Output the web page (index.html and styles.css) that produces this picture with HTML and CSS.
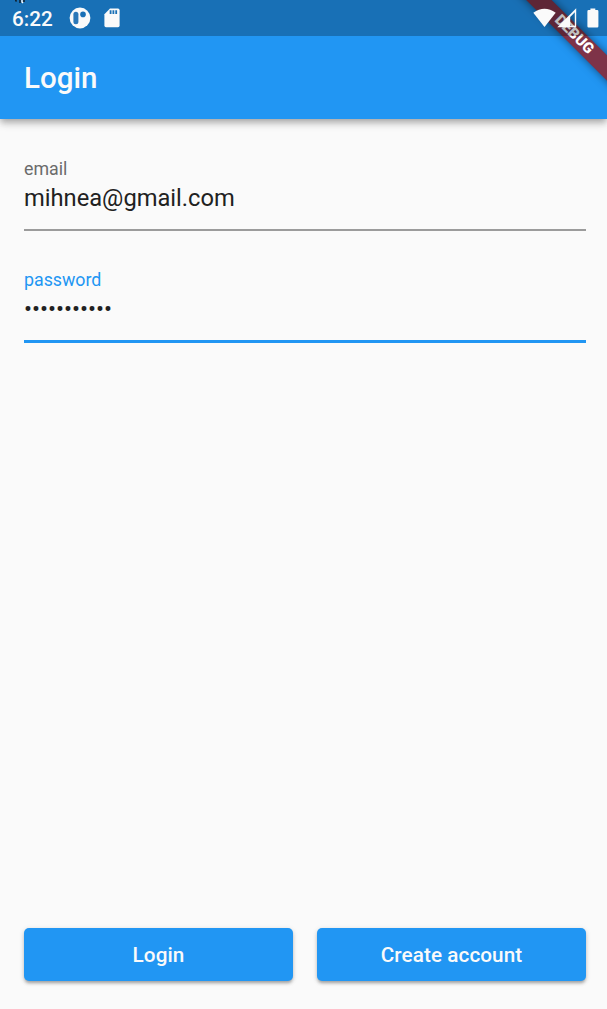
FILE: index.html
```html
<!DOCTYPE html>
<html lang="en">
<head>
<meta charset="utf-8">
<title>Login</title>
<link rel="stylesheet" href="styles.css">
</head>
<body>
<div class="screen">
  <header class="app-bar">
    <div class="status-bar">
      <svg class="cursor" width="14" height="4" viewBox="0 0 14 4"><path d="M1.5 0L2.5 1.5M6 0V3M10 0V2" fill="none" stroke="#101820" stroke-width="1.4"/><path d="M8 0V2L9 3" fill="none" stroke="#fff" stroke-width="1.4"/></svg>
      <span class="clock">6:22</span>
      <svg class="pill-icon" width="22" height="22" viewBox="0 0 22 22"><circle cx="11" cy="11" r="10.4" fill="#fafafa"/><rect x="4.4" y="4.8" width="5" height="12.4" rx="2.5" fill="#2b78b8"/><circle cx="14" cy="7.4" r="2.8" fill="#1a70b6"/></svg>
      <svg class="sd-icon" width="16" height="20" viewBox="0 0 16 20"><path d="M6 .6H14Q15.6.6 15.6 2.2V17.6Q15.6 19.2 14 19.2H2Q.4 19.2.4 17.6V6.2Z" fill="#fafafa"/><path d="M6.6 2.3V6M9.4 2.3V6M12.2 2.3V6" stroke="#1a70b6" stroke-width="1.8"/></svg>
      <div class="system-icons">
        <svg width="23" height="20" viewBox="0 0 23 20"><path d="M.3 4.8Q11.5-3.5 22.7 4.8L11.5 19Z" fill="#fafafa"/></svg>
        <svg class="signal" width="20" height="20" viewBox="0 0 20 20"><path fill-rule="evenodd" d="M19.2.2V19.3H.3ZM13.2 9V17.8H17.8V4.2Z" fill="#fafafa"/></svg>
        <svg class="battery" width="12" height="20" viewBox="0 0 12 20"><path d="M3.4.4H8.3V2H10.2Q11.4 2 11.4 3.2V18.3Q11.4 19.5 10.2 19.5H1.6Q.4 19.5.4 18.3V3.2Q.4 2 1.6 2H3.4Z" fill="#fafafa"/></svg>
      </div>
    </div>
    <h1 class="title">Login</h1>
    <div class="debug-clip"><div class="debug-banner">DEBUG</div></div>
  </header>
  <main class="form">
    <label class="field">
      <span class="label">email</span>
      <span class="value">mihnea@gmail.com</span>
    </label>
    <label class="field focused">
      <span class="label">password</span>
      <span class="value dots">•••••••••••</span>
    </label>
    <div class="actions">
      <button class="button" type="button">Login</button>
      <button class="button" type="button">Create account</button>
    </div>
  </main>
</div>
</body>
</html>
```

FILE: styles.css
```css
* { box-sizing: border-box; }
body { margin: 0; background: #fafafa; font-family: Roboto, sans-serif; }
.screen { width: 607px; height: 1009px; display: flex; flex-direction: column; overflow: hidden; }
.app-bar {
  position: relative;
  height: 119px;
  flex: none;
  background: #2196f3;
  color: #fafafa;
  box-shadow: 0 3px 6px -1px rgba(0,0,0,.22), 0 6px 7px rgba(0,0,0,.12), 0 1px 10px rgba(0,0,0,.08);
}
.status-bar {
  position: relative;
  z-index: 2;
  height: 36px;
  padding: 0 8px 0 12px;
  display: flex;
  align-items: center;
  background: rgba(0,0,0,.25);
}
.cursor { position: absolute; left: 14px; top: 0; }
.clock { width: 42px; font-size: 20.7px; font-weight: 500; line-height: 36px; padding-top: 2px; }
.pill-icon { margin-left: 15px; }
.sd-icon { margin-left: 13px; }
.system-icons { margin-left: auto; display: flex; align-items: center; }
.signal { margin-left: 1px; }
.battery { margin-left: 10px; }
.title { margin: 0; padding: 0 24px; font-size: 29.5px; font-weight: 500; line-height: 84px; }
.debug-clip { position: absolute; top: 0; right: 0; width: 110px; height: 119px; overflow: hidden; z-index: 1; }
.debug-banner {
  position: absolute;
  left: -6px;
  top: 26px;
  width: 166px;
  height: 17.6px;
  transform: rotate(45deg);
  background: #7e3348;
  box-shadow: 0 0 9px rgba(0,0,0,.5);
  color: #fff;
  font-size: 15px;
  font-weight: 900;
  line-height: 17.6px;
  text-align: center;
}
.form { flex: 1; display: flex; flex-direction: column; padding: 36px 21px 28px 24px; }
.field { display: flex; flex-direction: column; height: 76px; margin-bottom: 35px; border-bottom: 2px solid #9b9b9b; }
.label { color: #6b6b6b; font-size: 17.8px; line-height: 27px; }
.value { color: #212121; font-size: 23.7px; line-height: 33px; }
.focused { height: 77px; border-bottom: 3px solid #2196f3; }
.focused .label { color: #2196f3; }
.actions { display: flex; gap: 24px; margin-top: auto; }
.button {
  flex: 1 1 0;
  height: 53px;
  padding: 0;
  border: 0;
  border-radius: 5px;
  background: #2196f3;
  color: #fafafa;
  font: 500 20.7px Roboto, sans-serif;
  letter-spacing: .08px;
  box-shadow: 0 3px 3px -1px rgba(0,0,0,.22), 0 2px 4px rgba(0,0,0,.14), 0 1px 6px rgba(0,0,0,.08);
}
```
